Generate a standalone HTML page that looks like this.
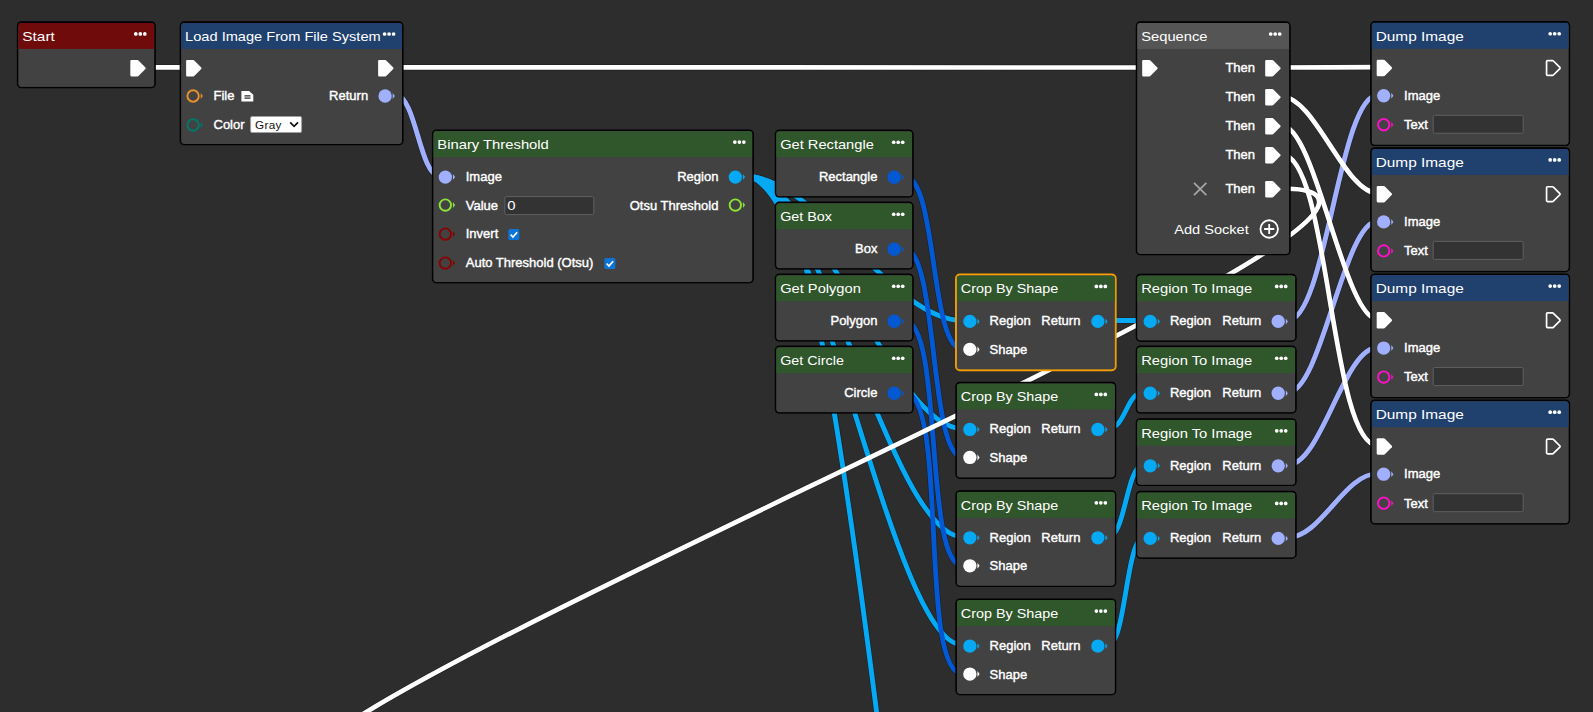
<!DOCTYPE html>
<html><head><meta charset="utf-8"><title>Graph</title><style>
html,body{margin:0;padding:0;background:#2d2d2d;}
body{width:1593px;height:712px;overflow:hidden;position:relative;font-family:"Liberation Sans",sans-serif;color:#fff;}
svg.w{position:absolute;left:0;top:0;}
.n{position:absolute;left:0;top:0;box-sizing:border-box;border:1px solid #000;border-radius:4px;box-shadow:0 -0.2px 0 0.45px #000;background:#424242;overflow:hidden;}
.h{position:absolute;left:0;top:0;right:0;height:25.7px;}
.t{position:absolute;left:3.9px;top:4.4px;font-size:13px;line-height:19px;white-space:nowrap;color:#fff;transform-origin:0 50%;}
.a{position:absolute;overflow:visible;}
.l{position:absolute;font-size:13px;line-height:20px;white-space:nowrap;color:#fff;-webkit-text-stroke:0.4px #fff;}
.inp{position:absolute;box-sizing:border-box;height:18.4px;border:1px solid #606060;border-radius:2px;background:#333;font-size:12.5px;line-height:16px;color:#fff;}
.inp span{position:absolute;left:2.2px;top:0.3px;font-size:13px;transform:scaleX(1.15);transform-origin:0 50%}
.sel{position:absolute;box-sizing:border-box;width:52px;height:17.8px;border:1px solid #a0a0a0;border-radius:2px;background:#fff;color:#111;font-size:11.7px;line-height:15px;}
.sel span{position:absolute;left:4.3px;top:0.8px;letter-spacing:0.4px}
.sel svg{position:absolute;right:1.8px;top:4.3px}
</style></head>
<body>
<svg class="w" width="1593" height="712" viewBox="0 0 1593 712" stroke-linecap="butt">
<path d="M395.9 95.4 C415.9 95.4 419.7 176.1 439.7 176.1" stroke="#1a1a1a" stroke-opacity="0.75" stroke-width="6.0" fill="none"/>
<path d="M745.3 176.2 C817.3 176.2 890.8 320.5 962.8 320.5" stroke="#1a1a1a" stroke-opacity="0.75" stroke-width="6.0" fill="none"/>
<path d="M745.3 176.2 C817.3 176.2 890.8 428.6 962.8 428.6" stroke="#1a1a1a" stroke-opacity="0.75" stroke-width="6.0" fill="none"/>
<path d="M745.3 176.2 C817.3 176.2 890.8 536.9 962.8 536.9" stroke="#1a1a1a" stroke-opacity="0.75" stroke-width="6.0" fill="none"/>
<path d="M745.3 176.2 C817.3 176.2 890.8 645.1 962.8 645.1" stroke="#1a1a1a" stroke-opacity="0.75" stroke-width="6.0" fill="none"/>
<path d="M745.3 176.2 C788.1 176.2 814.2 210.9 881.7 752.5" stroke="#1a1a1a" stroke-opacity="0.75" stroke-width="6.0" fill="none"/>
<path d="M904.2 176.3 C937.7 176.3 929.3 349.4 962.8 349.4" stroke="#1a1a1a" stroke-opacity="0.75" stroke-width="6.0" fill="none"/>
<path d="M904.2 248.3 C938.3 248.3 928.7 457.5 962.8 457.5" stroke="#1a1a1a" stroke-opacity="0.75" stroke-width="6.0" fill="none"/>
<path d="M904.2 320.4 C943.8 320.4 923.2 565.8 962.8 565.8" stroke="#1a1a1a" stroke-opacity="0.75" stroke-width="6.0" fill="none"/>
<path d="M904.2 392.4 C949.4 392.4 917.6 674.0 962.8 674.0" stroke="#1a1a1a" stroke-opacity="0.75" stroke-width="6.0" fill="none"/>
<path d="M1108.0 320.5 C1125.9 320.5 1125.9 320.5 1143.8 320.5" stroke="#1a1a1a" stroke-opacity="0.75" stroke-width="6.0" fill="none"/>
<path d="M1108.0 428.6 C1125.9 428.6 1125.9 392.4 1143.8 392.4" stroke="#1a1a1a" stroke-opacity="0.75" stroke-width="6.0" fill="none"/>
<path d="M1108.0 536.9 C1125.9 536.9 1125.9 464.9 1143.8 464.9" stroke="#1a1a1a" stroke-opacity="0.75" stroke-width="6.0" fill="none"/>
<path d="M1108.0 645.1 C1125.9 645.1 1125.9 537.5 1143.8 537.5" stroke="#1a1a1a" stroke-opacity="0.75" stroke-width="6.0" fill="none"/>
<path d="M1287.8 320.5 C1325.9 320.5 1339.4 95.2 1377.5 95.2" stroke="#1a1a1a" stroke-opacity="0.75" stroke-width="6.0" fill="none"/>
<path d="M1287.8 392.4 C1321.3 392.4 1344.0 221.3 1377.5 221.3" stroke="#1a1a1a" stroke-opacity="0.75" stroke-width="6.0" fill="none"/>
<path d="M1287.8 464.9 C1321.3 464.9 1344.0 347.5 1377.5 347.5" stroke="#1a1a1a" stroke-opacity="0.75" stroke-width="6.0" fill="none"/>
<path d="M1287.8 537.5 C1321.3 537.5 1344.0 473.6 1377.5 473.6" stroke="#1a1a1a" stroke-opacity="0.75" stroke-width="6.0" fill="none"/>
<path d="M146.0 67.4 C156.0 67.4 176.1 67.4 186.1 67.4" stroke="#1a1a1a" stroke-opacity="0.75" stroke-width="5.800000000000001" fill="none"/>
<path d="M394.7 67.4 C512.2 67.4 1025.3 67.5 1142.8 67.5" stroke="#1a1a1a" stroke-opacity="0.75" stroke-width="5.800000000000001" fill="none"/>
<path d="M1281.6 67.5 C1315.1 67.5 1344.5 67.2 1378.0 67.2" stroke="#1a1a1a" stroke-opacity="0.75" stroke-width="5.800000000000001" fill="none"/>
<path d="M1281.6 96.5 C1315.1 96.5 1344.5 193.3 1378.0 193.3" stroke="#1a1a1a" stroke-opacity="0.75" stroke-width="5.800000000000001" fill="none"/>
<path d="M1281.6 125.4 C1315.6 125.4 1344.0 319.5 1378.0 319.5" stroke="#1a1a1a" stroke-opacity="0.75" stroke-width="5.800000000000001" fill="none"/>
<path d="M1281.6 154.3 C1329.8 154.3 1329.8 445.7 1378.0 445.7" stroke="#1a1a1a" stroke-opacity="0.75" stroke-width="5.800000000000001" fill="none"/>
<path d="M1281.4 188.5 C1524.3 188.5 527.2 592.8 325 739" stroke="#1a1a1a" stroke-opacity="0.75" stroke-width="5.800000000000001" fill="none"/>
<path d="M395.9 95.4 C415.9 95.4 419.7 176.1 439.7 176.1" stroke="#a0b0ff" stroke-width="4.9" fill="none"/>
<path d="M745.3 176.2 C817.3 176.2 890.8 320.5 962.8 320.5" stroke="#05a9f4" stroke-width="4.9" fill="none"/>
<path d="M745.3 176.2 C817.3 176.2 890.8 428.6 962.8 428.6" stroke="#05a9f4" stroke-width="4.9" fill="none"/>
<path d="M745.3 176.2 C817.3 176.2 890.8 536.9 962.8 536.9" stroke="#05a9f4" stroke-width="4.9" fill="none"/>
<path d="M745.3 176.2 C817.3 176.2 890.8 645.1 962.8 645.1" stroke="#05a9f4" stroke-width="4.9" fill="none"/>
<path d="M745.3 176.2 C788.1 176.2 814.2 210.9 881.7 752.5" stroke="#05a9f4" stroke-width="4.9" fill="none"/>
<path d="M904.2 176.3 C937.7 176.3 929.3 349.4 962.8 349.4" stroke="#0359d3" stroke-width="4.9" fill="none"/>
<path d="M904.2 248.3 C938.3 248.3 928.7 457.5 962.8 457.5" stroke="#0359d3" stroke-width="4.9" fill="none"/>
<path d="M904.2 320.4 C943.8 320.4 923.2 565.8 962.8 565.8" stroke="#0359d3" stroke-width="4.9" fill="none"/>
<path d="M904.2 392.4 C949.4 392.4 917.6 674.0 962.8 674.0" stroke="#0359d3" stroke-width="4.9" fill="none"/>
<path d="M1108.0 320.5 C1125.9 320.5 1125.9 320.5 1143.8 320.5" stroke="#05a9f4" stroke-width="4.9" fill="none"/>
<path d="M1108.0 428.6 C1125.9 428.6 1125.9 392.4 1143.8 392.4" stroke="#05a9f4" stroke-width="4.9" fill="none"/>
<path d="M1108.0 536.9 C1125.9 536.9 1125.9 464.9 1143.8 464.9" stroke="#05a9f4" stroke-width="4.9" fill="none"/>
<path d="M1108.0 645.1 C1125.9 645.1 1125.9 537.5 1143.8 537.5" stroke="#05a9f4" stroke-width="4.9" fill="none"/>
<path d="M1287.8 320.5 C1325.9 320.5 1339.4 95.2 1377.5 95.2" stroke="#a0b0ff" stroke-width="4.9" fill="none"/>
<path d="M1287.8 392.4 C1321.3 392.4 1344.0 221.3 1377.5 221.3" stroke="#a0b0ff" stroke-width="4.9" fill="none"/>
<path d="M1287.8 464.9 C1321.3 464.9 1344.0 347.5 1377.5 347.5" stroke="#a0b0ff" stroke-width="4.9" fill="none"/>
<path d="M1287.8 537.5 C1321.3 537.5 1344.0 473.6 1377.5 473.6" stroke="#a0b0ff" stroke-width="4.9" fill="none"/>
<path d="M146.0 67.4 C156.0 67.4 176.1 67.4 186.1 67.4" stroke="#fff" stroke-width="4.7" fill="none"/>
<path d="M394.7 67.4 C512.2 67.4 1025.3 67.5 1142.8 67.5" stroke="#fff" stroke-width="4.7" fill="none"/>
<path d="M1281.6 67.5 C1315.1 67.5 1344.5 67.2 1378.0 67.2" stroke="#fff" stroke-width="4.7" fill="none"/>
<path d="M1281.6 96.5 C1315.1 96.5 1344.5 193.3 1378.0 193.3" stroke="#fff" stroke-width="4.7" fill="none"/>
<path d="M1281.6 125.4 C1315.6 125.4 1344.0 319.5 1378.0 319.5" stroke="#fff" stroke-width="4.7" fill="none"/>
<path d="M1281.6 154.3 C1329.8 154.3 1329.8 445.7 1378.0 445.7" stroke="#fff" stroke-width="4.7" fill="none"/>
<path d="M1281.4 188.5 C1524.3 188.5 527.2 592.8 325 739" stroke="#fff" stroke-width="4.7" fill="none"/>
</svg>
<div class="n" style="transform:translate(17.30px,21.95px);width:137.50px;height:65.70px;"><div class="h" style="background:#700b0b"><div class="t" style="transform:scaleX(1.1831);top:4.05px">Start</div><svg class="a" style="left:113.75px;top:5.20px" width="16" height="12" viewBox="0 0 16 12"><circle cx="3.5" cy="6" r="1.85" fill="#fff"/><circle cx="8" cy="6" r="1.85" fill="#fff"/><circle cx="12.5" cy="6" r="1.85" fill="#fff"/></svg></div><svg class="a" style="left:111.60px;top:36.90px" width="16.5" height="16.5" viewBox="0 0 17 17"><path d="M1.2 0 H7.3 Q7.9 0 8.4 0.5 L15.6 7.8 Q16.2 8.5 15.6 9.2 L8.4 16.5 Q7.9 17 7.3 17 H1.2 Q0 17 0 15.8 V1.2 Q0 0 1.2 0 Z" fill="#fff"/></svg></div>
<div class="n" style="transform:translate(180.10px,22.00px);width:223.35px;height:123.30px;"><div class="h" style="background:#20406e"><div class="t" style="transform:scaleX(1.1233);top:4.00px">Load Image From File System</div><svg class="a" style="left:199.60px;top:5.20px" width="16" height="12" viewBox="0 0 16 12"><circle cx="3.5" cy="6" r="1.85" fill="#fff"/><circle cx="8" cy="6" r="1.85" fill="#fff"/><circle cx="12.5" cy="6" r="1.85" fill="#fff"/></svg></div><svg class="a" style="left:4.70px;top:36.90px" width="16.5" height="16.5" viewBox="0 0 17 17"><path d="M1.2 0 H7.3 Q7.9 0 8.4 0.5 L15.6 7.8 Q16.2 8.5 15.6 9.2 L8.4 16.5 Q7.9 17 7.3 17 H1.2 Q0 17 0 15.8 V1.2 Q0 0 1.2 0 Z" fill="#fff"/></svg><svg class="a" style="left:197.45px;top:36.90px" width="16.5" height="16.5" viewBox="0 0 17 17"><path d="M1.2 0 H7.3 Q7.9 0 8.4 0.5 L15.6 7.8 Q16.2 8.5 15.6 9.2 L8.4 16.5 Q7.9 17 7.3 17 H1.2 Q0 17 0 15.8 V1.2 Q0 0 1.2 0 Z" fill="#fff"/></svg><svg class="a" style="left:4.90px;top:65.85px" width="18" height="14" viewBox="0 0 18 14"><circle cx="7" cy="7" r="5.7" fill="none" stroke="#e8912d" stroke-width="1.9"/><path d="M14.6 4 L16.7 7 L14.6 10 Z" fill="#e8912d"/></svg><div class="l" style="left:32.40px;top:63.00px">File</div><svg class="a" style="left:60.10px;top:67.85px" width="12.5" height="11" viewBox="0 0 12.5 11"><path d="M0.3 0 H8 L12.2 3.8 V10.4 H0.3 Z" fill="#fff"/><path d="M3.4 4.9 H9.4 M3.4 7.1 H9.4" stroke="#2c2c2c" stroke-width="1.3"/></svg><div class="l" style="right:34.30px;top:63.00px">Return</div><svg class="a" style="left:197.25px;top:65.85px" width="18" height="14" viewBox="0 0 18 14"><circle cx="7" cy="7" r="6.65" fill="#a0b0ff"/><path d="M14.6 4 L16.7 7 L14.6 10 Z" fill="#a0b0ff"/></svg><svg class="a" style="left:4.90px;top:95.00px" width="18" height="14" viewBox="0 0 18 14"><circle cx="7" cy="7" r="5.7" fill="none" stroke="#00796b" stroke-width="1.9"/><path d="M14.6 4 L16.7 7 L14.6 10 Z" fill="#00796b"/></svg><div class="l" style="left:32.40px;top:92.00px">Color</div><div class="sel" style="left:68.50px;top:92.70px"><span>Gray</span><svg width="10" height="7.3" viewBox="0 0 11 8"><path d="M1.2 1.6 L5.5 5.9 L9.8 1.6" fill="none" stroke="#111" stroke-width="1.9"/></svg></div></div>
<div class="n" style="transform:translate(432.35px,130.10px);width:321.35px;height:153.45px;"><div class="h" style="background:#30562c"><div class="t" style="transform:scaleX(1.1372);top:3.90px">Binary Threshold</div><svg class="a" style="left:297.60px;top:5.20px" width="16" height="12" viewBox="0 0 16 12"><circle cx="3.5" cy="6" r="1.85" fill="#fff"/><circle cx="8" cy="6" r="1.85" fill="#fff"/><circle cx="12.5" cy="6" r="1.85" fill="#fff"/></svg></div><svg class="a" style="left:5.20px;top:38.50px" width="18" height="14" viewBox="0 0 18 14"><circle cx="7" cy="7" r="6.65" fill="#a0b0ff"/><path d="M14.6 4 L16.7 7 L14.6 10 Z" fill="#a0b0ff"/></svg><div class="l" style="left:32.40px;top:35.90px">Image</div><div class="l" style="right:34.30px;top:35.90px">Region</div><svg class="a" style="left:295.25px;top:38.50px" width="18" height="14" viewBox="0 0 18 14"><circle cx="7" cy="7" r="6.65" fill="#05a9f4"/><path d="M14.6 4 L16.7 7 L14.6 10 Z" fill="#05a9f4"/></svg><svg class="a" style="left:5.20px;top:67.40px" width="18" height="14" viewBox="0 0 18 14"><circle cx="7" cy="7" r="5.7" fill="none" stroke="#8ce436" stroke-width="1.9"/><path d="M14.6 4 L16.7 7 L14.6 10 Z" fill="#8ce436"/></svg><div class="l" style="left:32.40px;top:64.90px">Value</div><div class="inp" style="left:70.5px;top:65.40px;width:90px"><span>0</span></div><div class="l" style="right:34.30px;top:64.90px">Otsu Threshold</div><svg class="a" style="left:295.25px;top:67.40px" width="18" height="14" viewBox="0 0 18 14"><circle cx="7" cy="7" r="5.7" fill="none" stroke="#8ce436" stroke-width="1.9"/><path d="M14.6 4 L16.7 7 L14.6 10 Z" fill="#8ce436"/></svg><svg class="a" style="left:5.20px;top:95.90px" width="18" height="14" viewBox="0 0 18 14"><circle cx="7" cy="7" r="5.7" fill="none" stroke="#8b0000" stroke-width="1.9"/><path d="M14.6 4 L16.7 7 L14.6 10 Z" fill="#8b0000"/></svg><div class="l" style="left:32.40px;top:92.90px">Invert</div><svg class="a" style="left:75.00px;top:97.70px" width="11" height="11" viewBox="0 0 11 11"><rect x="0" y="0" width="11" height="11" rx="1.6" fill="#0b74d8"/><path d="M2.3 5.6 L4.6 7.9 L8.8 3.2" fill="none" stroke="#fff" stroke-width="1.7"/></svg><svg class="a" style="left:5.20px;top:124.80px" width="18" height="14" viewBox="0 0 18 14"><circle cx="7" cy="7" r="5.7" fill="none" stroke="#8b0000" stroke-width="1.9"/><path d="M14.6 4 L16.7 7 L14.6 10 Z" fill="#8b0000"/></svg><div class="l" style="left:32.40px;top:121.90px">Auto Threshold (Otsu)</div><svg class="a" style="left:171.00px;top:126.60px" width="11" height="11" viewBox="0 0 11 11"><rect x="0" y="0" width="11" height="11" rx="1.6" fill="#0b74d8"/><path d="M2.3 5.6 L4.6 7.9 L8.8 3.2" fill="none" stroke="#fff" stroke-width="1.7"/></svg></div>
<div class="n" style="transform:translate(775.20px,130.25px);width:137.75px;height:67.05px;"><div class="h" style="background:#30562c"><div class="t" style="transform:scaleX(1.1262);top:3.75px">Get Rectangle</div><svg class="a" style="left:114.00px;top:5.20px" width="16" height="12" viewBox="0 0 16 12"><circle cx="3.5" cy="6" r="1.85" fill="#fff"/><circle cx="8" cy="6" r="1.85" fill="#fff"/><circle cx="12.5" cy="6" r="1.85" fill="#fff"/></svg></div><div class="l" style="right:34.50px;top:35.75px">Rectangle</div><svg class="a" style="left:111.25px;top:38.50px" width="18" height="14" viewBox="0 0 18 14"><circle cx="7" cy="7" r="6.65" fill="#0359d3"/><path d="M14.6 4 L16.7 7 L14.6 10 Z" fill="#0359d3"/></svg></div>
<div class="n" style="transform:translate(775.20px,202.25px);width:137.75px;height:67.05px;"><div class="h" style="background:#30562c"><div class="t" style="transform:scaleX(1.1007);top:3.75px">Get Box</div><svg class="a" style="left:114.00px;top:5.20px" width="16" height="12" viewBox="0 0 16 12"><circle cx="3.5" cy="6" r="1.85" fill="#fff"/><circle cx="8" cy="6" r="1.85" fill="#fff"/><circle cx="12.5" cy="6" r="1.85" fill="#fff"/></svg></div><div class="l" style="right:34.50px;top:35.75px">Box</div><svg class="a" style="left:111.25px;top:38.50px" width="18" height="14" viewBox="0 0 18 14"><circle cx="7" cy="7" r="6.65" fill="#0359d3"/><path d="M14.6 4 L16.7 7 L14.6 10 Z" fill="#0359d3"/></svg></div>
<div class="n" style="transform:translate(775.20px,274.25px);width:137.75px;height:67.05px;"><div class="h" style="background:#30562c"><div class="t" style="transform:scaleX(1.1265);top:3.75px">Get Polygon</div><svg class="a" style="left:114.00px;top:5.20px" width="16" height="12" viewBox="0 0 16 12"><circle cx="3.5" cy="6" r="1.85" fill="#fff"/><circle cx="8" cy="6" r="1.85" fill="#fff"/><circle cx="12.5" cy="6" r="1.85" fill="#fff"/></svg></div><div class="l" style="right:34.50px;top:35.75px">Polygon</div><svg class="a" style="left:111.25px;top:38.50px" width="18" height="14" viewBox="0 0 18 14"><circle cx="7" cy="7" r="6.65" fill="#0359d3"/><path d="M14.6 4 L16.7 7 L14.6 10 Z" fill="#0359d3"/></svg></div>
<div class="n" style="transform:translate(775.20px,346.25px);width:137.75px;height:67.05px;"><div class="h" style="background:#30562c"><div class="t" style="transform:scaleX(1.1021);top:3.75px">Get Circle</div><svg class="a" style="left:114.00px;top:5.20px" width="16" height="12" viewBox="0 0 16 12"><circle cx="3.5" cy="6" r="1.85" fill="#fff"/><circle cx="8" cy="6" r="1.85" fill="#fff"/><circle cx="12.5" cy="6" r="1.85" fill="#fff"/></svg></div><div class="l" style="right:34.50px;top:35.75px">Circle</div><svg class="a" style="left:111.25px;top:38.50px" width="18" height="14" viewBox="0 0 18 14"><circle cx="7" cy="7" r="6.65" fill="#0359d3"/><path d="M14.6 4 L16.7 7 L14.6 10 Z" fill="#0359d3"/></svg></div>
<div class="n" style="transform:translate(955.85px,274.40px);width:159.85px;height:96.30px;border-color:#f5a105;box-shadow:0 0 0 0.8px #f5a105"><div class="h" style="background:#30562c"><div class="t" style="transform:scaleX(1.1058);top:3.60px">Crop By Shape</div><svg class="a" style="left:136.10px;top:5.20px" width="16" height="12" viewBox="0 0 16 12"><circle cx="3.5" cy="6" r="1.85" fill="#fff"/><circle cx="8" cy="6" r="1.85" fill="#fff"/><circle cx="12.5" cy="6" r="1.85" fill="#fff"/></svg></div><svg class="a" style="left:5.50px;top:38.50px" width="18" height="14" viewBox="0 0 18 14"><circle cx="7" cy="7" r="6.65" fill="#05a9f4"/><path d="M14.6 4 L16.7 7 L14.6 10 Z" fill="#05a9f4"/></svg><div class="l" style="left:32.70px;top:35.60px">Region</div><div class="l" style="right:34.30px;top:35.60px">Return</div><svg class="a" style="left:133.90px;top:38.50px" width="18" height="14" viewBox="0 0 18 14"><circle cx="7" cy="7" r="6.65" fill="#05a9f4"/><path d="M14.6 4 L16.7 7 L14.6 10 Z" fill="#05a9f4"/></svg><svg class="a" style="left:5.50px;top:67.40px" width="18" height="14" viewBox="0 0 18 14"><circle cx="7" cy="7" r="6.65" fill="#ffffff"/><path d="M14.6 4 L16.7 7 L14.6 10 Z" fill="#ffffff"/></svg><div class="l" style="left:32.70px;top:64.60px">Shape</div></div>
<div class="n" style="transform:translate(955.85px,382.45px);width:159.85px;height:96.30px;"><div class="h" style="background:#30562c"><div class="t" style="transform:scaleX(1.1058);top:3.55px">Crop By Shape</div><svg class="a" style="left:136.10px;top:5.20px" width="16" height="12" viewBox="0 0 16 12"><circle cx="3.5" cy="6" r="1.85" fill="#fff"/><circle cx="8" cy="6" r="1.85" fill="#fff"/><circle cx="12.5" cy="6" r="1.85" fill="#fff"/></svg></div><svg class="a" style="left:5.50px;top:38.50px" width="18" height="14" viewBox="0 0 18 14"><circle cx="7" cy="7" r="6.65" fill="#05a9f4"/><path d="M14.6 4 L16.7 7 L14.6 10 Z" fill="#05a9f4"/></svg><div class="l" style="left:32.70px;top:35.55px">Region</div><div class="l" style="right:34.30px;top:35.55px">Return</div><svg class="a" style="left:133.90px;top:38.50px" width="18" height="14" viewBox="0 0 18 14"><circle cx="7" cy="7" r="6.65" fill="#05a9f4"/><path d="M14.6 4 L16.7 7 L14.6 10 Z" fill="#05a9f4"/></svg><svg class="a" style="left:5.50px;top:67.40px" width="18" height="14" viewBox="0 0 18 14"><circle cx="7" cy="7" r="6.65" fill="#ffffff"/><path d="M14.6 4 L16.7 7 L14.6 10 Z" fill="#ffffff"/></svg><div class="l" style="left:32.70px;top:64.55px">Shape</div></div>
<div class="n" style="transform:translate(955.85px,490.80px);width:159.85px;height:96.30px;"><div class="h" style="background:#30562c"><div class="t" style="transform:scaleX(1.1058);top:4.20px">Crop By Shape</div><svg class="a" style="left:136.10px;top:5.20px" width="16" height="12" viewBox="0 0 16 12"><circle cx="3.5" cy="6" r="1.85" fill="#fff"/><circle cx="8" cy="6" r="1.85" fill="#fff"/><circle cx="12.5" cy="6" r="1.85" fill="#fff"/></svg></div><svg class="a" style="left:5.50px;top:38.50px" width="18" height="14" viewBox="0 0 18 14"><circle cx="7" cy="7" r="6.65" fill="#05a9f4"/><path d="M14.6 4 L16.7 7 L14.6 10 Z" fill="#05a9f4"/></svg><div class="l" style="left:32.70px;top:36.20px">Region</div><div class="l" style="right:34.30px;top:36.20px">Return</div><svg class="a" style="left:133.90px;top:38.50px" width="18" height="14" viewBox="0 0 18 14"><circle cx="7" cy="7" r="6.65" fill="#05a9f4"/><path d="M14.6 4 L16.7 7 L14.6 10 Z" fill="#05a9f4"/></svg><svg class="a" style="left:5.50px;top:67.40px" width="18" height="14" viewBox="0 0 18 14"><circle cx="7" cy="7" r="6.65" fill="#ffffff"/><path d="M14.6 4 L16.7 7 L14.6 10 Z" fill="#ffffff"/></svg><div class="l" style="left:32.70px;top:64.20px">Shape</div></div>
<div class="n" style="transform:translate(955.85px,599.05px);width:159.85px;height:96.30px;"><div class="h" style="background:#30562c"><div class="t" style="transform:scaleX(1.1058);top:3.95px">Crop By Shape</div><svg class="a" style="left:136.10px;top:5.20px" width="16" height="12" viewBox="0 0 16 12"><circle cx="3.5" cy="6" r="1.85" fill="#fff"/><circle cx="8" cy="6" r="1.85" fill="#fff"/><circle cx="12.5" cy="6" r="1.85" fill="#fff"/></svg></div><svg class="a" style="left:5.50px;top:38.50px" width="18" height="14" viewBox="0 0 18 14"><circle cx="7" cy="7" r="6.65" fill="#05a9f4"/><path d="M14.6 4 L16.7 7 L14.6 10 Z" fill="#05a9f4"/></svg><div class="l" style="left:32.70px;top:35.95px">Region</div><div class="l" style="right:34.30px;top:35.95px">Return</div><svg class="a" style="left:133.90px;top:38.50px" width="18" height="14" viewBox="0 0 18 14"><circle cx="7" cy="7" r="6.65" fill="#05a9f4"/><path d="M14.6 4 L16.7 7 L14.6 10 Z" fill="#05a9f4"/></svg><svg class="a" style="left:5.50px;top:67.40px" width="18" height="14" viewBox="0 0 18 14"><circle cx="7" cy="7" r="6.65" fill="#ffffff"/><path d="M14.6 4 L16.7 7 L14.6 10 Z" fill="#ffffff"/></svg><div class="l" style="left:32.70px;top:64.95px">Shape</div></div>
<div class="n" style="transform:translate(1136.20px,274.40px);width:159.80px;height:67.00px;"><div class="h" style="background:#30562c"><div class="t" style="transform:scaleX(1.1321);top:3.60px">Region To Image</div><svg class="a" style="left:136.05px;top:5.20px" width="16" height="12" viewBox="0 0 16 12"><circle cx="3.5" cy="6" r="1.85" fill="#fff"/><circle cx="8" cy="6" r="1.85" fill="#fff"/><circle cx="12.5" cy="6" r="1.85" fill="#fff"/></svg></div><svg class="a" style="left:6.00px;top:38.50px" width="18" height="14" viewBox="0 0 18 14"><circle cx="7" cy="7" r="6.65" fill="#05a9f4"/><path d="M14.6 4 L16.7 7 L14.6 10 Z" fill="#05a9f4"/></svg><div class="l" style="left:32.70px;top:35.60px">Region</div><div class="l" style="right:33.70px;top:35.60px">Return</div><svg class="a" style="left:134.15px;top:38.50px" width="18" height="14" viewBox="0 0 18 14"><circle cx="7" cy="7" r="6.65" fill="#a0b0ff"/><path d="M14.6 4 L16.7 7 L14.6 10 Z" fill="#a0b0ff"/></svg></div>
<div class="n" style="transform:translate(1136.20px,346.25px);width:159.80px;height:67.30px;"><div class="h" style="background:#30562c"><div class="t" style="transform:scaleX(1.1321);top:3.75px">Region To Image</div><svg class="a" style="left:136.05px;top:5.20px" width="16" height="12" viewBox="0 0 16 12"><circle cx="3.5" cy="6" r="1.85" fill="#fff"/><circle cx="8" cy="6" r="1.85" fill="#fff"/><circle cx="12.5" cy="6" r="1.85" fill="#fff"/></svg></div><svg class="a" style="left:6.00px;top:38.50px" width="18" height="14" viewBox="0 0 18 14"><circle cx="7" cy="7" r="6.65" fill="#05a9f4"/><path d="M14.6 4 L16.7 7 L14.6 10 Z" fill="#05a9f4"/></svg><div class="l" style="left:32.70px;top:35.75px">Region</div><div class="l" style="right:33.70px;top:35.75px">Return</div><svg class="a" style="left:134.15px;top:38.50px" width="18" height="14" viewBox="0 0 18 14"><circle cx="7" cy="7" r="6.65" fill="#a0b0ff"/><path d="M14.6 4 L16.7 7 L14.6 10 Z" fill="#a0b0ff"/></svg></div>
<div class="n" style="transform:translate(1136.20px,418.83px);width:159.80px;height:67.30px;"><div class="h" style="background:#30562c"><div class="t" style="transform:scaleX(1.1321);top:4.17px">Region To Image</div><svg class="a" style="left:136.05px;top:5.20px" width="16" height="12" viewBox="0 0 16 12"><circle cx="3.5" cy="6" r="1.85" fill="#fff"/><circle cx="8" cy="6" r="1.85" fill="#fff"/><circle cx="12.5" cy="6" r="1.85" fill="#fff"/></svg></div><svg class="a" style="left:6.00px;top:38.50px" width="18" height="14" viewBox="0 0 18 14"><circle cx="7" cy="7" r="6.65" fill="#05a9f4"/><path d="M14.6 4 L16.7 7 L14.6 10 Z" fill="#05a9f4"/></svg><div class="l" style="left:32.70px;top:36.17px">Region</div><div class="l" style="right:33.70px;top:36.17px">Return</div><svg class="a" style="left:134.15px;top:38.50px" width="18" height="14" viewBox="0 0 18 14"><circle cx="7" cy="7" r="6.65" fill="#a0b0ff"/><path d="M14.6 4 L16.7 7 L14.6 10 Z" fill="#a0b0ff"/></svg></div>
<div class="n" style="transform:translate(1136.20px,491.40px);width:159.80px;height:67.30px;"><div class="h" style="background:#30562c"><div class="t" style="transform:scaleX(1.1321);top:3.60px">Region To Image</div><svg class="a" style="left:136.05px;top:5.20px" width="16" height="12" viewBox="0 0 16 12"><circle cx="3.5" cy="6" r="1.85" fill="#fff"/><circle cx="8" cy="6" r="1.85" fill="#fff"/><circle cx="12.5" cy="6" r="1.85" fill="#fff"/></svg></div><svg class="a" style="left:6.00px;top:38.50px" width="18" height="14" viewBox="0 0 18 14"><circle cx="7" cy="7" r="6.65" fill="#05a9f4"/><path d="M14.6 4 L16.7 7 L14.6 10 Z" fill="#05a9f4"/></svg><div class="l" style="left:32.70px;top:35.60px">Region</div><div class="l" style="right:33.70px;top:35.60px">Return</div><svg class="a" style="left:134.15px;top:38.50px" width="18" height="14" viewBox="0 0 18 14"><circle cx="7" cy="7" r="6.65" fill="#a0b0ff"/><path d="M14.6 4 L16.7 7 L14.6 10 Z" fill="#a0b0ff"/></svg></div>
<div class="n" style="transform:translate(1136.20px,22.00px);width:153.95px;height:232.50px;"><div class="h" style="background:#555555"><div class="t" style="transform:scaleX(1.1322);top:4.00px">Sequence</div><svg class="a" style="left:130.20px;top:5.20px" width="16" height="12" viewBox="0 0 16 12"><circle cx="3.5" cy="6" r="1.85" fill="#fff"/><circle cx="8" cy="6" r="1.85" fill="#fff"/><circle cx="12.5" cy="6" r="1.85" fill="#fff"/></svg></div><svg class="a" style="left:5.30px;top:36.95px" width="16.5" height="16.5" viewBox="0 0 17 17"><path d="M1.2 0 H7.3 Q7.9 0 8.4 0.5 L15.6 7.8 Q16.2 8.5 15.6 9.2 L8.4 16.5 Q7.9 17 7.3 17 H1.2 Q0 17 0 15.8 V1.2 Q0 0 1.2 0 Z" fill="#fff"/></svg><div class="l" style="right:34.10px;top:35.00px">Then</div><svg class="a" style="left:128.05px;top:37.15px" width="16.5" height="16.5" viewBox="0 0 17 17"><path d="M1.2 0 H7.3 Q7.9 0 8.4 0.5 L15.6 7.8 Q16.2 8.5 15.6 9.2 L8.4 16.5 Q7.9 17 7.3 17 H1.2 Q0 17 0 15.8 V1.2 Q0 0 1.2 0 Z" fill="#fff"/></svg><div class="l" style="right:34.10px;top:64.00px">Then</div><svg class="a" style="left:128.05px;top:66.15px" width="16.5" height="16.5" viewBox="0 0 17 17"><path d="M1.2 0 H7.3 Q7.9 0 8.4 0.5 L15.6 7.8 Q16.2 8.5 15.6 9.2 L8.4 16.5 Q7.9 17 7.3 17 H1.2 Q0 17 0 15.8 V1.2 Q0 0 1.2 0 Z" fill="#fff"/></svg><div class="l" style="right:34.10px;top:93.00px">Then</div><svg class="a" style="left:128.05px;top:95.05px" width="16.5" height="16.5" viewBox="0 0 17 17"><path d="M1.2 0 H7.3 Q7.9 0 8.4 0.5 L15.6 7.8 Q16.2 8.5 15.6 9.2 L8.4 16.5 Q7.9 17 7.3 17 H1.2 Q0 17 0 15.8 V1.2 Q0 0 1.2 0 Z" fill="#fff"/></svg><div class="l" style="right:34.10px;top:122.00px">Then</div><svg class="a" style="left:128.05px;top:123.95px" width="16.5" height="16.5" viewBox="0 0 17 17"><path d="M1.2 0 H7.3 Q7.9 0 8.4 0.5 L15.6 7.8 Q16.2 8.5 15.6 9.2 L8.4 16.5 Q7.9 17 7.3 17 H1.2 Q0 17 0 15.8 V1.2 Q0 0 1.2 0 Z" fill="#fff"/></svg><div class="l" style="right:34.10px;top:156.00px">Then</div><svg class="a" style="left:128.05px;top:158.05px" width="16.5" height="16.5" viewBox="0 0 17 17"><path d="M1.2 0 H7.3 Q7.9 0 8.4 0.5 L15.6 7.8 Q16.2 8.5 15.6 9.2 L8.4 16.5 Q7.9 17 7.3 17 H1.2 Q0 17 0 15.8 V1.2 Q0 0 1.2 0 Z" fill="#fff"/></svg><svg class="a" style="left:56.00px;top:158.80px" width="14" height="14" viewBox="0 0 14 14"><path d="M0.8 0.8 L13.2 13.2 M13.2 0.8 L0.8 13.2" stroke="#a6a6a6" stroke-width="1.7"/></svg><div class="t" style="left:37.00px;top:197.00px;transform:scaleX(1.1218);position:absolute;line-height:19px;padding:0">Add Socket</div><svg class="a" style="left:122.10px;top:195.90px" width="20" height="20" viewBox="0 0 20 20"><circle cx="10" cy="10" r="8.75" fill="none" stroke="#fff" stroke-width="1.8"/><path d="M10 4.9 V15.1 M4.9 10 H15.1" stroke="#fff" stroke-width="1.8"/></svg></div>
<div class="n" style="transform:translate(1370.70px,21.75px);width:199.15px;height:123.60px;"><div class="h" style="background:#20406e"><div class="t" style="transform:scaleX(1.1838);top:4.25px">Dump Image</div><svg class="a" style="left:175.40px;top:5.20px" width="16" height="12" viewBox="0 0 16 12"><circle cx="3.5" cy="6" r="1.85" fill="#fff"/><circle cx="8" cy="6" r="1.85" fill="#fff"/><circle cx="12.5" cy="6" r="1.85" fill="#fff"/></svg></div><svg class="a" style="left:5.40px;top:36.90px" width="16.5" height="16.5" viewBox="0 0 17 17"><path d="M1.2 0 H7.3 Q7.9 0 8.4 0.5 L15.6 7.8 Q16.2 8.5 15.6 9.2 L8.4 16.5 Q7.9 17 7.3 17 H1.2 Q0 17 0 15.8 V1.2 Q0 0 1.2 0 Z" fill="#fff"/></svg><svg class="a" style="left:173.55px;top:36.90px" width="16.5" height="16.5" viewBox="0 0 17 17"><path d="M1.9 0.9 H7 Q7.5 0.9 7.9 1.3 L14.6 7.9 Q15.1 8.5 14.6 9.1 L7.9 15.7 Q7.5 16.1 7 16.1 H1.9 Q0.9 16.1 0.9 15.1 V1.9 Q0.9 0.9 1.9 0.9 Z" fill="none" stroke="#fff" stroke-width="1.75" stroke-linejoin="round"/></svg><svg class="a" style="left:5.20px;top:65.85px" width="18" height="14" viewBox="0 0 18 14"><circle cx="7" cy="7" r="6.65" fill="#a0b0ff"/><path d="M14.6 4 L16.7 7 L14.6 10 Z" fill="#a0b0ff"/></svg><div class="l" style="left:32.40px;top:63.25px">Image</div><svg class="a" style="left:5.20px;top:95.00px" width="18" height="14" viewBox="0 0 18 14"><circle cx="7" cy="7" r="5.7" fill="none" stroke="#ff10c8" stroke-width="1.9"/><path d="M14.6 4 L16.7 7 L14.6 10 Z" fill="#ff10c8"/></svg><div class="l" style="left:32.40px;top:92.25px">Text</div><div class="inp" style="left:61.10px;top:92.40px;width:91.3px;height:19px"></div></div>
<div class="n" style="transform:translate(1370.70px,147.90px);width:199.15px;height:123.60px;"><div class="h" style="background:#20406e"><div class="t" style="transform:scaleX(1.1838);top:4.10px">Dump Image</div><svg class="a" style="left:175.40px;top:5.20px" width="16" height="12" viewBox="0 0 16 12"><circle cx="3.5" cy="6" r="1.85" fill="#fff"/><circle cx="8" cy="6" r="1.85" fill="#fff"/><circle cx="12.5" cy="6" r="1.85" fill="#fff"/></svg></div><svg class="a" style="left:5.40px;top:36.90px" width="16.5" height="16.5" viewBox="0 0 17 17"><path d="M1.2 0 H7.3 Q7.9 0 8.4 0.5 L15.6 7.8 Q16.2 8.5 15.6 9.2 L8.4 16.5 Q7.9 17 7.3 17 H1.2 Q0 17 0 15.8 V1.2 Q0 0 1.2 0 Z" fill="#fff"/></svg><svg class="a" style="left:173.55px;top:36.90px" width="16.5" height="16.5" viewBox="0 0 17 17"><path d="M1.9 0.9 H7 Q7.5 0.9 7.9 1.3 L14.6 7.9 Q15.1 8.5 14.6 9.1 L7.9 15.7 Q7.5 16.1 7 16.1 H1.9 Q0.9 16.1 0.9 15.1 V1.9 Q0.9 0.9 1.9 0.9 Z" fill="none" stroke="#fff" stroke-width="1.75" stroke-linejoin="round"/></svg><svg class="a" style="left:5.20px;top:65.85px" width="18" height="14" viewBox="0 0 18 14"><circle cx="7" cy="7" r="6.65" fill="#a0b0ff"/><path d="M14.6 4 L16.7 7 L14.6 10 Z" fill="#a0b0ff"/></svg><div class="l" style="left:32.40px;top:63.10px">Image</div><svg class="a" style="left:5.20px;top:95.00px" width="18" height="14" viewBox="0 0 18 14"><circle cx="7" cy="7" r="5.7" fill="none" stroke="#ff10c8" stroke-width="1.9"/><path d="M14.6 4 L16.7 7 L14.6 10 Z" fill="#ff10c8"/></svg><div class="l" style="left:32.40px;top:92.10px">Text</div><div class="inp" style="left:61.10px;top:92.40px;width:91.3px;height:19px"></div></div>
<div class="n" style="transform:translate(1370.70px,274.05px);width:199.15px;height:123.60px;"><div class="h" style="background:#20406e"><div class="t" style="transform:scaleX(1.1838);top:3.95px">Dump Image</div><svg class="a" style="left:175.40px;top:5.20px" width="16" height="12" viewBox="0 0 16 12"><circle cx="3.5" cy="6" r="1.85" fill="#fff"/><circle cx="8" cy="6" r="1.85" fill="#fff"/><circle cx="12.5" cy="6" r="1.85" fill="#fff"/></svg></div><svg class="a" style="left:5.40px;top:36.90px" width="16.5" height="16.5" viewBox="0 0 17 17"><path d="M1.2 0 H7.3 Q7.9 0 8.4 0.5 L15.6 7.8 Q16.2 8.5 15.6 9.2 L8.4 16.5 Q7.9 17 7.3 17 H1.2 Q0 17 0 15.8 V1.2 Q0 0 1.2 0 Z" fill="#fff"/></svg><svg class="a" style="left:173.55px;top:36.90px" width="16.5" height="16.5" viewBox="0 0 17 17"><path d="M1.9 0.9 H7 Q7.5 0.9 7.9 1.3 L14.6 7.9 Q15.1 8.5 14.6 9.1 L7.9 15.7 Q7.5 16.1 7 16.1 H1.9 Q0.9 16.1 0.9 15.1 V1.9 Q0.9 0.9 1.9 0.9 Z" fill="none" stroke="#fff" stroke-width="1.75" stroke-linejoin="round"/></svg><svg class="a" style="left:5.20px;top:65.85px" width="18" height="14" viewBox="0 0 18 14"><circle cx="7" cy="7" r="6.65" fill="#a0b0ff"/><path d="M14.6 4 L16.7 7 L14.6 10 Z" fill="#a0b0ff"/></svg><div class="l" style="left:32.40px;top:62.95px">Image</div><svg class="a" style="left:5.20px;top:95.00px" width="18" height="14" viewBox="0 0 18 14"><circle cx="7" cy="7" r="5.7" fill="none" stroke="#ff10c8" stroke-width="1.9"/><path d="M14.6 4 L16.7 7 L14.6 10 Z" fill="#ff10c8"/></svg><div class="l" style="left:32.40px;top:91.95px">Text</div><div class="inp" style="left:61.10px;top:92.40px;width:91.3px;height:19px"></div></div>
<div class="n" style="transform:translate(1370.70px,400.20px);width:199.15px;height:123.60px;"><div class="h" style="background:#20406e"><div class="t" style="transform:scaleX(1.1838);top:3.80px">Dump Image</div><svg class="a" style="left:175.40px;top:5.20px" width="16" height="12" viewBox="0 0 16 12"><circle cx="3.5" cy="6" r="1.85" fill="#fff"/><circle cx="8" cy="6" r="1.85" fill="#fff"/><circle cx="12.5" cy="6" r="1.85" fill="#fff"/></svg></div><svg class="a" style="left:5.40px;top:36.90px" width="16.5" height="16.5" viewBox="0 0 17 17"><path d="M1.2 0 H7.3 Q7.9 0 8.4 0.5 L15.6 7.8 Q16.2 8.5 15.6 9.2 L8.4 16.5 Q7.9 17 7.3 17 H1.2 Q0 17 0 15.8 V1.2 Q0 0 1.2 0 Z" fill="#fff"/></svg><svg class="a" style="left:173.55px;top:36.90px" width="16.5" height="16.5" viewBox="0 0 17 17"><path d="M1.9 0.9 H7 Q7.5 0.9 7.9 1.3 L14.6 7.9 Q15.1 8.5 14.6 9.1 L7.9 15.7 Q7.5 16.1 7 16.1 H1.9 Q0.9 16.1 0.9 15.1 V1.9 Q0.9 0.9 1.9 0.9 Z" fill="none" stroke="#fff" stroke-width="1.75" stroke-linejoin="round"/></svg><svg class="a" style="left:5.20px;top:65.85px" width="18" height="14" viewBox="0 0 18 14"><circle cx="7" cy="7" r="6.65" fill="#a0b0ff"/><path d="M14.6 4 L16.7 7 L14.6 10 Z" fill="#a0b0ff"/></svg><div class="l" style="left:32.40px;top:62.80px">Image</div><svg class="a" style="left:5.20px;top:95.00px" width="18" height="14" viewBox="0 0 18 14"><circle cx="7" cy="7" r="5.7" fill="none" stroke="#ff10c8" stroke-width="1.9"/><path d="M14.6 4 L16.7 7 L14.6 10 Z" fill="#ff10c8"/></svg><div class="l" style="left:32.40px;top:92.80px">Text</div><div class="inp" style="left:61.10px;top:92.40px;width:91.3px;height:19px"></div></div>
</body></html>
